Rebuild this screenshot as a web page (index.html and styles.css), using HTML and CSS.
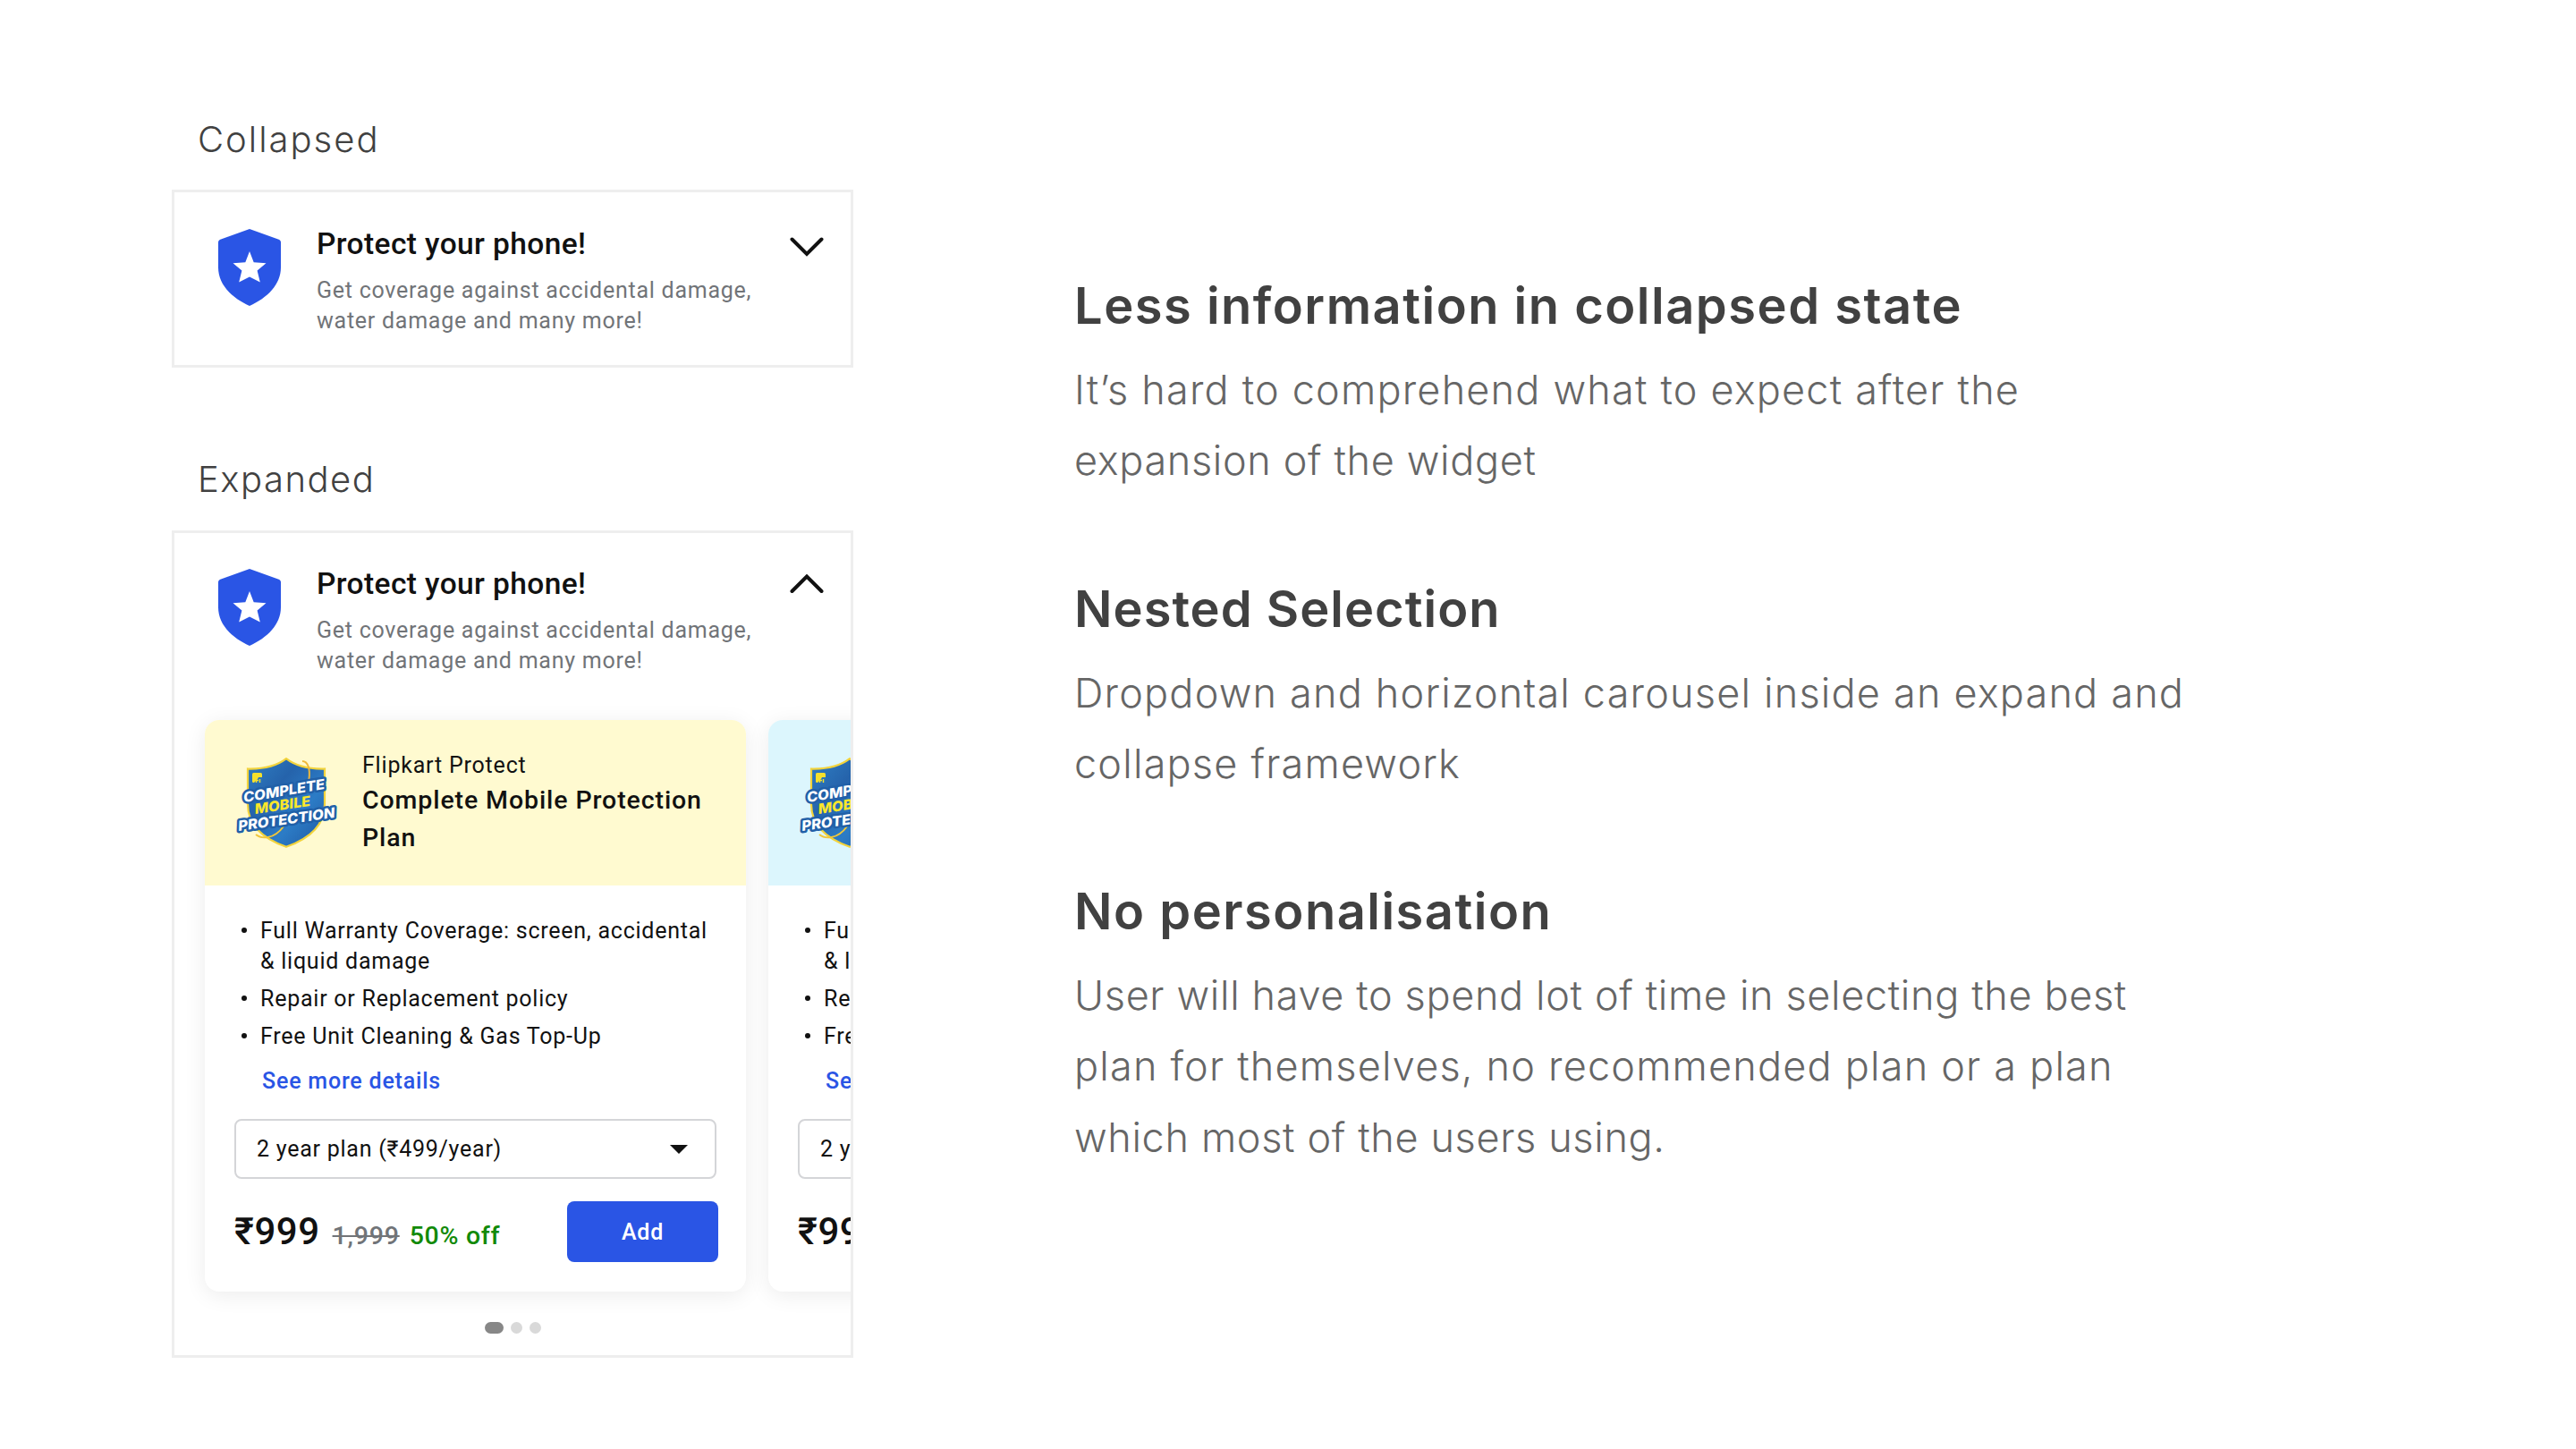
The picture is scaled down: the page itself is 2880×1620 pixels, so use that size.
FILE: index.html
```html
<!DOCTYPE html>
<html lang="en">
<head>
    <meta charset="UTF-8">
    <meta name="viewport" content="width=device-width, initial-scale=1.0">
    <title>Protect your phone</title>
    <link rel="stylesheet" href="styles.css">
</head>
<body>

    <!-- shared drawings -->
    <svg class="defs" width="0" height="0">
        <defs>
            <linearGradient id="shieldFill" x1="0" y1="0" x2="1" y2="1">
                <stop offset="0" stop-color="#2f7fc4"/>
                <stop offset="0.35" stop-color="#2563ab"/>
                <stop offset="0.65" stop-color="#2c7cc6"/>
                <stop offset="1" stop-color="#2058a2"/>
            </linearGradient>
        </defs>
        <symbol id="shield" viewBox="0 0 70 86">
            <path d="M35 0 L67 11.5 Q70 12.5 70 15 V43 C70 62 55 77 35 86 C15 77 0 62 0 43 V15 Q0 12.5 3 11.5 Z" fill="#2a55e5"/>
            <path d="M35 25 L39.7 37.2 L53.5 38.3 L43.6 46.6 L46.8 59.5 L35 53.5 L23.2 59.5 L26.4 46.6 L16.5 38.3 L30.3 37.2 Z" fill="#fff"/>
        </symbol>
        <symbol id="logo" viewBox="0 0 114 101">
            <path d="M56 1.2 C66 9 80 13 99 12.5 V52 C99 77 81 91 56 99.8 C31 91 13 77 13 52 V12.5 C32 13 46 9 56 1.2 Z" fill="url(#shieldFill)" stroke="#f2d33c" stroke-width="2.2"/>
            <path d="M74 4 C80 4 83 12 81.5 24" fill="none" stroke="#f0b93a" stroke-width="2"/>
            <path d="M22 86 C28 91 42 92 53 77" fill="none" stroke="#f0c63a" stroke-width="2"/>
            <rect x="18" y="17" width="11" height="11" rx="1.5" fill="#f5e02c"/>
            <path d="M20 28 L24 24 L25 22 H29 V28 Z" fill="#2a74b8"/>
            <path d="M22.5 28 V25.5 H25 M26.5 28 V24" fill="none" stroke="#f5e02c" stroke-width="1.4"/>
            <g class="logo-text">
                <text transform="translate(9 50) rotate(-9.5)" textLength="92" lengthAdjust="spacingAndGlyphs">COMPLETE</text>
                <text transform="translate(3 82) rotate(-8)" textLength="109" lengthAdjust="spacingAndGlyphs">PROTECTION</text>
                <text class="logo-yellow" transform="translate(21.5 63) rotate(-8.5)" textLength="63" lengthAdjust="spacingAndGlyphs">MOBILE</text>
            </g>
        </symbol>
    </svg>

    <!-- widgets -->
    <div class="widgets">
        <h3 class="label">Collapsed</h3>
        <div class="widget collapsed">
            <div class="widget-header">
                <svg class="shield"><use href="#shield"/></svg>
                <div class="widget-info">
                    <h4 class="widget-title">Protect your phone!</h4>
                    <p class="widget-sub">Get coverage against accidental damage,<br>water damage and many more!</p>
                </div>
                <svg class="chevron" viewBox="0 0 38 22"><path d="M2.5 2.5 L19 19 L35.5 2.5"/></svg>
            </div>
        </div>

        <h3 class="label label-expanded">Expanded</h3>
        <div class="widget expanded">
            <div class="widget-header">
                <svg class="shield"><use href="#shield"/></svg>
                <div class="widget-info">
                    <h4 class="widget-title">Protect your phone!</h4>
                    <p class="widget-sub">Get coverage against accidental damage,<br>water damage and many more!</p>
                </div>
                <svg class="chevron" viewBox="0 0 38 22"><path d="M2.5 19 L19 2.5 L35.5 19"/></svg>
            </div>

            <div class="carousel">
                <div class="plan">
                    <div class="plan-header yellow">
                        <svg class="logo"><use href="#logo"/></svg>
                        <div class="plan-name">
                            <p class="plan-brand">Flipkart Protect</p>
                            <p class="plan-title">Complete Mobile Protection<br>Plan</p>
                        </div>
                    </div>
                    <div class="plan-body">
                        <ul class="features">
                            <li>Full Warranty Coverage: screen, accidental<br>&amp; liquid damage</li>
                            <li>Repair or Replacement policy</li>
                            <li>Free Unit Cleaning &amp; Gas Top-Up</li>
                        </ul>
                        <a class="more">See more details</a>
                        <div class="select">
                            2 year plan (₹499/year)
                            <svg class="caret" viewBox="0 0 20 10"><path d="M0 0 H20 L10 10 Z"/></svg>
                        </div>
                        <div class="buy">
                            <span class="price">₹999</span>
                            <span class="old-price">1,999</span>
                            <span class="discount">50% off</span>
                            <button class="add">Add</button>
                        </div>
                    </div>
                </div>

                <div class="plan">
                    <div class="plan-header blue">
                        <svg class="logo"><use href="#logo"/></svg>
                    </div>
                    <div class="plan-body">
                        <ul class="features">
                            <li>Full Warranty Coverage: screen, accidental<br>&amp; liquid damage</li>
                            <li>Repair or Replacement policy</li>
                            <li>Free Unit Cleaning &amp; Gas Top-Up</li>
                        </ul>
                        <a class="more">See more details</a>
                        <div class="select">2 year plan (₹499/year)</div>
                        <div class="buy">
                            <span class="price">₹999</span>
                        </div>
                    </div>
                </div>
            </div>

            <div class="dots">
                <i class="dot active"></i>
                <i class="dot"></i>
                <i class="dot"></i>
            </div>
        </div>
    </div>

    <!-- notes -->
    <div class="notes">
        <div class="note">
            <h2>Less information in collapsed state</h2>
            <p>It’s hard to comprehend what to expect after the<br><span class="tight">expansion of the widget</span></p>
        </div>
        <div class="note">
            <h2 class="narrow">Nested Selection</h2>
            <p>Dropdown and horizontal carousel inside an expand and<br>collapse framework</p>
        </div>
        <div class="note">
            <h2>No personalisation</h2>
            <p><span class="tight">User will have to spend lot of time in selecting the best</span><br>plan for themselves, no recommended plan or a plan<br><span class="tight">which most of the users using.</span></p>
        </div>
    </div>

</body>
</html>
```
FILE: styles.css
```css
* {
    box-sizing: border-box;
    margin: 0;
    padding: 0;
}

body {
    width: 2880px;
    height: 1620px;
    background-color: #fff;
    overflow: hidden;
    display: flex;
    align-items: flex-start;
    font-family: 'Roboto', sans-serif;
    color: #111;
}

.defs {
    position: absolute;
}

.widgets {
    width: 954px;
    padding: 132px 0 0 192px;
}

.label {
    font-family: 'Inter', sans-serif;
    font-size: 40px;
    font-weight: 300;
    line-height: 48px;
    letter-spacing: 2px;
    color: #414141;
    padding-left: 29px;
    margin-bottom: 32px;
}

.label-expanded {
    letter-spacing: 1.5px;
    margin-top: 101px;
    margin-bottom: 33px;
}

.widget {
    border: 3px solid #eee;
    overflow: hidden;
}

.collapsed {
    height: 199px;
}

.expanded {
    height: 925px;
}

.widget-header {
    display: flex;
    padding: 38px 30px 0 49px;
    height: 160px;
}

.expanded .widget-header {
    padding-top: 37px;
}

.shield {
    width: 70px;
    height: 86px;
    margin: 3px 40px 0 0;
}

.widget-title {
    font-size: 33.5px;
    font-weight: 500;
    line-height: 40px;
    letter-spacing: 0.4px;
    margin-bottom: 15px;
}

.widget-sub {
    font-size: 25px;
    line-height: 34px;
    letter-spacing: 0.75px;
    color: #717478;
    white-space: nowrap;
}

.chevron {
    width: 38px;
    height: 22px;
    margin: 12px 0 0 auto;
    fill: none;
    stroke: #111;
    stroke-width: 4;
    stroke-linecap: round;
    stroke-linejoin: miter;
}

.expanded .chevron {
    margin-top: 9px;
}

.carousel {
    display: flex;
    gap: 25px;
    padding: 49px 0 0 34px;
}

.plan {
    flex: none;
    width: 605px;
    height: 639px;
    border-radius: 16px;
    background-color: #fff;
    box-shadow: 0 4px 24px rgba(0, 0, 0, 0.08);
}

.plan-header {
    display: flex;
    height: 185px;
    padding: 35px 0 0 35px;
    border-radius: 16px 16px 0 0;
}

.yellow {
    background-color: #fffad0;
}

.blue {
    background-color: #dcf6fd;
}

.logo {
    width: 114px;
    height: 101px;
    margin: 7px 27px 0 0;
    overflow: visible;
}

.logo-text {
    font-family: 'Inter', sans-serif;
    font-size: 15.5px;
    font-weight: 800;
    font-style: italic;
    fill: #fff;
    stroke: #2160a8;
    stroke-width: 5px;
    stroke-linejoin: round;
    paint-order: stroke;
}

.logo-yellow {
    fill: #fbe72a;
    stroke: none;
}

.plan-brand {
    font-size: 25px;
    line-height: 32px;
    letter-spacing: 0.8px;
    margin-bottom: 2px;
}

.plan-title {
    font-size: 28.5px;
    font-weight: 500;
    line-height: 42px;
    letter-spacing: 0.9px;
}

.plan-body {
    padding: 34px 31px 0 33px;
}

.features {
    list-style: none;
    font-size: 25px;
    line-height: 34px;
    letter-spacing: 0.75px;
    white-space: nowrap;
}

.features li {
    position: relative;
    padding-left: 29px;
    margin-bottom: 8px;
}

.features li::before {
    content: '';
    position: absolute;
    left: 8px;
    top: 13px;
    width: 6px;
    height: 6px;
    border-radius: 50%;
    background-color: #111;
}

.more {
    display: block;
    font-size: 25px;
    font-weight: 500;
    line-height: 34px;
    letter-spacing: 0.8px;
    color: #2a55e5;
    padding-left: 31px;
    margin: 16px 0 25px;
}

.select {
    display: flex;
    align-items: center;
    justify-content: space-between;
    width: 539px;
    height: 67px;
    padding: 0 30px 0 23px;
    border: 2px solid #d4d5d8;
    border-radius: 8px;
    font-size: 25px;
    letter-spacing: 0.75px;
    white-space: nowrap;
}

.caret {
    width: 20px;
    height: 10px;
    fill: #111;
}

.buy {
    display: flex;
    align-items: baseline;
    margin-top: 25px;
}

.price {
    font-size: 42px;
    font-weight: 500;
    line-height: 68px;
    letter-spacing: 0.5px;
}

.old-price {
    font-size: 28.5px;
    font-weight: 500;
    letter-spacing: 0.8px;
    color: #717478;
    text-decoration: line-through 2px;
    margin-left: 14px;
}

.discount {
    font-size: 28.5px;
    font-weight: 500;
    letter-spacing: 0.7px;
    color: #128a09;
    margin-left: 11px;
}

.add {
    align-self: flex-start;
    width: 169px;
    height: 68px;
    margin-left: auto;
    border: none;
    border-radius: 8px;
    background-color: #2a55e5;
    color: #fff;
    font-family: 'Roboto', sans-serif;
    font-size: 25px;
    font-weight: 500;
    letter-spacing: 0.8px;
}

.dots {
    display: flex;
    justify-content: center;
    gap: 8px;
    margin-top: 34px;
}

.dot {
    width: 13px;
    height: 13px;
    border-radius: 7px;
    background-color: #d9d9d9;
}

.active {
    width: 21px;
    background-color: #878787;
}

.notes {
    padding: 307px 0 0 247px;
    font-family: 'Inter', sans-serif;
    white-space: nowrap;
}

.note {
    margin-bottom: 91px;
}

.note h2 {
    font-size: 56px;
    font-weight: 600;
    line-height: 70px;
    letter-spacing: 1.5px;
    color: #414141;
    margin-bottom: 19px;
}

.note .narrow {
    letter-spacing: 1px;
}

.note p {
    font-size: 45px;
    font-weight: 300;
    line-height: 79.3px;
    letter-spacing: 1.2px;
    color: #666;
}

.note .tight {
    letter-spacing: 0.65px;
}
```
